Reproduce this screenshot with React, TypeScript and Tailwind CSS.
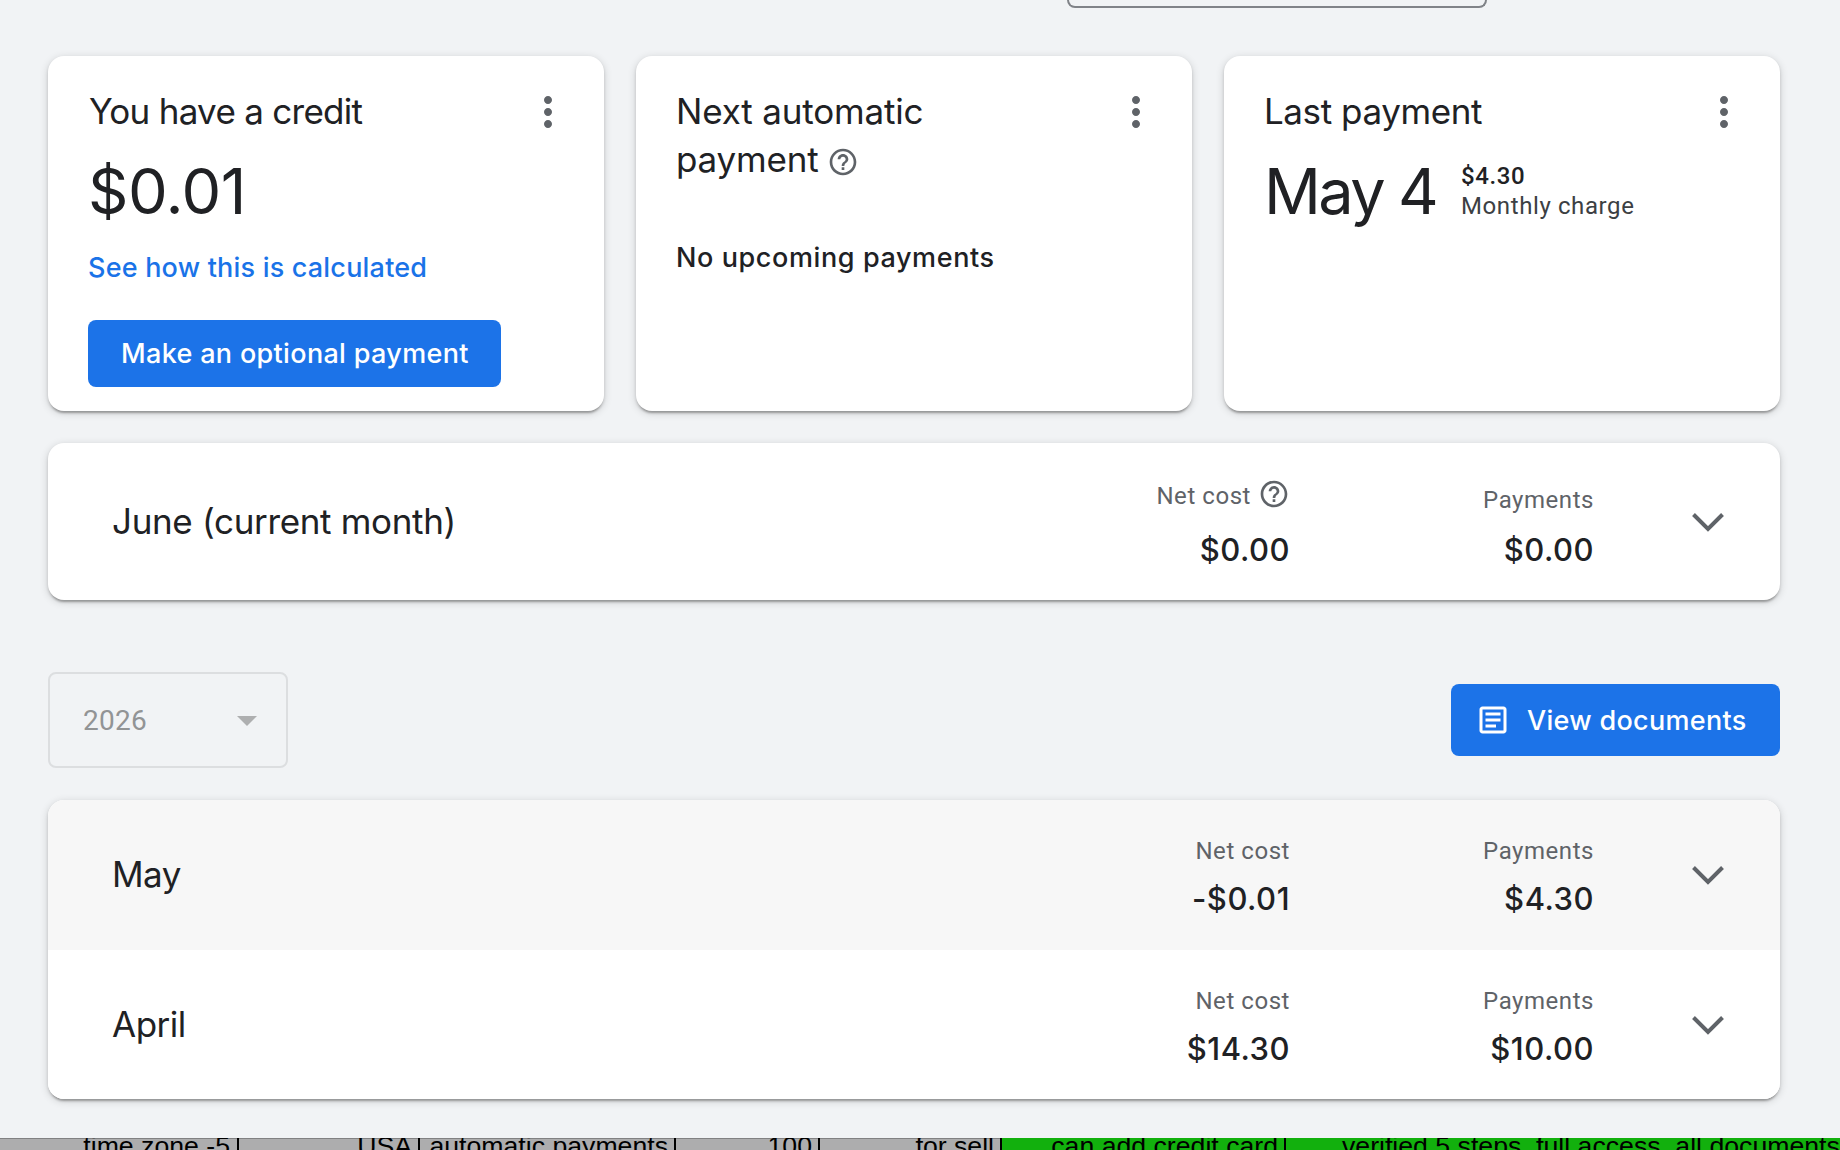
import type { ReactNode } from "react";
import { MdHelpOutline, MdMoreVert, MdOutlineArticle } from "react-icons/md";

function Card({ children }: { children: ReactNode }) {
  return (
    <div className="flex h-[355px] w-[556px] items-start justify-between rounded-2xl bg-white pl-10 pr-8 pt-8 shadow-[0_4px_2px_-2px_rgba(0,0,0,0.2),0_2px_3px_rgba(0,0,0,0.14),0_2px_8px_rgba(0,0,0,0.16)]">
      <div className="-mt-px">{children}</div>
      <button className="h-12 w-12 shrink-0 text-[#5f6368]">
        <MdMoreVert className="h-12 w-12" />
      </button>
    </div>
  );
}

function Chevron() {
  return (
    <svg viewBox="0 0 32 19" className="ml-[98px] mt-px h-[19px] w-8 shrink-0" fill="none">
      <path d="M1.5 1.5L16 16L30.5 1.5" stroke="#5f6368" strokeWidth="4" />
    </svg>
  );
}

function Amount({ children }: { children: ReactNode }) {
  return <p className="text-[31px] font-medium leading-10 tracking-[0.5px]">{children}</p>;
}

const months = [
  { name: "May", netCost: "-$0.01", payments: "$4.30", row: "bg-[#f7f7f7]" },
  { name: "April", netCost: "$14.30", payments: "$10.00", row: "bg-white" },
];

const cells = [
  { text: "time zone -5", cell: "w-[239px] justify-end border-r-2 pr-[7px]" },
  { text: "USA", cell: "w-[181px] justify-end border-r-2 pr-[6px]" },
  { text: "automatic payments", cell: "w-[256px] justify-end border-r-2 pr-[6px]" },
  { text: "100", cell: "w-[144px] justify-end border-r-2 pr-[6px]" },
  { text: "for sell", cell: "w-[182px] justify-end border-r-2 pr-[6px]" },
  { text: "can add credit card", cell: "w-[284px] justify-end border-r-2 bg-[#12b00d] pr-[6px]" },
  { text: "verified 5 steps, full access, all documents", cell: "w-[554px] justify-start bg-[#12b00d] pl-14" },
];

export default function App() {
  return (
    <div className="h-[1150px] w-[1840px] overflow-hidden bg-[#f1f3f5] font-['Inter',sans-serif] text-[#202124]">
      {/* Bottom edge of the account picker */}
      <div className="ml-[1067px] h-2 w-[420px] rounded-b-lg border-2 border-t-0 border-[#808388]" />

      <div className="ml-12 mt-12 w-[1732px]">
        {/* Summary cards */}
        <div className="flex gap-8">
          <Card>
            <h2 className="pl-px text-[35px] leading-[48px] tracking-[-0.72px]">You have a credit</h2>
            <p className="mt-6 text-[63px] leading-[64px] tracking-[-0.5px]">$0.01</p>
            <a className="mt-[29px] block text-[27px] font-medium leading-8 tracking-[0.2px] text-[#1a73e8]">
              See how this is calculated
            </a>
            <button className="mt-9 flex h-[67px] w-[413px] items-center rounded-lg bg-[#1c73e8] pl-[33px] pt-0.5 text-[27px] font-medium tracking-[0.33px] text-white">
              Make an optional payment
            </button>
          </Card>

          <Card>
            <h2 className="text-[35px] leading-[48px] tracking-[-0.17px]">
              Next automatic
              <span className="flex items-center">
                payment
                <MdHelpOutline className="ml-2 mt-1.5 h-8 w-8 text-[#5f6368]" />
              </span>
            </h2>
            <p className="mt-[59px] text-[27px] font-medium leading-8 tracking-[0.6px]">No upcoming payments</p>
          </Card>

          <Card>
            <h2 className="text-[35px] leading-[48px] tracking-[-0.42px]">Last payment</h2>
            <div className="mt-6 flex">
              <p className="w-[197px] shrink-0 whitespace-nowrap text-[63px] leading-[64px] tracking-[-2.6px]">May 4</p>
              <div className="mt-0.5 whitespace-nowrap font-['Roboto',sans-serif] text-[24px] leading-[30px] tracking-[0.6px]">
                <p className="font-medium">$4.30</p>
                <p className="text-[#3c4043]">Monthly charge</p>
              </div>
            </div>
          </Card>
        </div>

        {/* Current month */}
        <div className="mt-8 flex h-[157px] items-center rounded-2xl bg-white pl-16 pr-14 shadow-[0_4px_2px_-2px_rgba(0,0,0,0.2),0_2px_3px_rgba(0,0,0,0.14),0_2px_8px_rgba(0,0,0,0.16)]">
          <h3 className="mb-0.5 text-[35px] leading-[48px] tracking-[-0.33px]">June (current month)</h3>
          <div className="ml-auto flex items-end pt-[5px] text-right">
            <div>
              <div className="mb-5 flex h-8 items-center font-['Roboto',sans-serif] text-[24px] tracking-[0.55px] text-[#5f6368]">
                <span className="pt-1 leading-6">Net cost</span>
                <MdHelpOutline className="ml-[7px] h-8 w-8" />
              </div>
              <Amount>$0.00</Amount>
            </div>
            <div className="w-[304px]">
              <p className="mb-[18px] font-['Roboto',sans-serif] text-[24px] leading-6 tracking-[0.55px] text-[#5f6368]">Payments</p>
              <Amount>$0.00</Amount>
            </div>
          </div>
          <Chevron />
        </div>

        {/* Year filter */}
        <div className="mt-[72px] flex items-center justify-between">
          <div className="flex h-24 w-60 items-center justify-between rounded-lg border-2 border-[#dcdee0] pl-[33px] pr-[29px]">
            <span className="pt-0.5 font-['Roboto',sans-serif] text-[28px] tracking-[0.3px] text-[#929495]">2026</span>
            <svg viewBox="0 0 20 10" className="mt-0.5 h-2.5 w-5" fill="#aeafb0">
              <path d="M0 0H20L10 10Z" />
            </svg>
          </div>
          <button className="flex h-[72px] w-[329px] items-center rounded-lg bg-[#1c73e8] pl-6 text-[27px] font-medium tracking-[0.3px] text-white">
            <MdOutlineArticle className="mr-4 h-9 w-9" />
            <span className="pt-0.5">View documents</span>
          </button>
        </div>

        {/* Past months */}
        <div className="mt-8 h-[299px] overflow-hidden rounded-2xl bg-white shadow-[0_4px_2px_-2px_rgba(0,0,0,0.2),0_2px_3px_rgba(0,0,0,0.14),0_2px_8px_rgba(0,0,0,0.16)]">
          {months.map((month) => (
            <div key={month.name} className={`flex h-[150px] items-center pl-16 pr-14 ${month.row}`}>
              <h3 className="mb-0.5 text-[35px] leading-[48px] tracking-[-0.5px]">{month.name}</h3>
              <div className="ml-auto flex pt-2 text-right">
                <div>
                  <p className="mb-4 font-['Roboto',sans-serif] text-[24px] leading-6 tracking-[0.55px] text-[#5f6368]">Net cost</p>
                  <Amount>{month.netCost}</Amount>
                </div>
                <div className="w-[304px]">
                  <p className="mb-4 font-['Roboto',sans-serif] text-[24px] leading-6 tracking-[0.55px] text-[#5f6368]">Payments</p>
                  <Amount>{month.payments}</Amount>
                </div>
              </div>
              <Chevron />
            </div>
          ))}
        </div>
      </div>

      {/* Spreadsheet row peeking out below the page */}
      <div className="mt-[39px] flex h-3 overflow-hidden bg-[#adadae] font-['Liberation_Sans',sans-serif] text-[26.67px] leading-4 text-black shadow-[inset_0_1px_0_rgba(0,0,0,0.25)]">
        {cells.map((c) => (
          <div key={c.text} className={`flex h-4 shrink-0 whitespace-nowrap border-black ${c.cell}`}>
            {c.text}
          </div>
        ))}
      </div>
    </div>
  );
}
